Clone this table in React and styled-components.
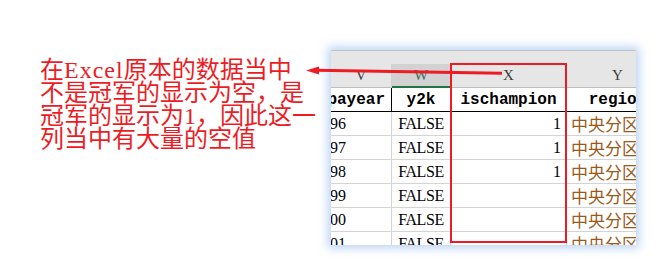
import React from "react";
import styled, { createGlobalStyle } from "styled-components";

const Global = createGlobalStyle`
  html, body { margin: 0; padding: 0; background: #ffffff; }
  * { box-sizing: border-box; }
`;

const RED = "#ed1c24";

const Page = styled.div`
  position: relative;
  width: 659px;
  height: 274px;
  background: #ffffff;
  display: flex;
  align-items: flex-start;
  padding: 50px 0 0 40px;
  overflow: hidden;
`;

const Note = styled.div`
  width: 264px;
  margin-top: 9px;
  font-family: "Liberation Serif", "Noto Sans CJK SC", serif;
  font-size: 24px;
  line-height: 23px;
  color: ${RED};
  white-space: nowrap;
`;

const Latin = styled.span`
  letter-spacing: 1px;
`;

const Panel = styled.div`
  position: relative;
  margin-left: 27px;
  width: 305px;
  height: 195px;
  overflow: hidden;
  background: #ffffff;
  border-top: 1px solid #c4c4c4;
  box-shadow: 0 0 9px 3px rgba(130, 175, 235, 0.55);
`;

const Strip = styled.div`
  height: 13px;
  background: #e6e6e6;
`;

const Grid = styled.div`
  display: grid;
  grid-template-columns: 61px 59px 116px 102px;
  width: 338px;
`;

const Cell = styled.div`
  height: 24px;
  display: flex;
  align-items: center;
  overflow: hidden;
  white-space: nowrap;
  border-right: 1px solid ${(p) => p.$line || "#d4d4d4"};
  border-bottom: 1px solid ${(p) => p.$line || "#d4d4d4"};
  justify-content: ${(p) => p.$justify || "flex-start"};
  padding: ${(p) => p.$pad || "0"};
`;

const LetterCell = styled(Cell)`
  background: ${(p) => (p.$active ? "#d2d2d2" : "#e6e6e6")};
  border-right-color: #d0d0d0;
  border-bottom: ${(p) => (p.$active ? "2px solid #217346" : "1px solid #bdbdbd")};
  font-family: "Liberation Serif", serif;
  font-size: 15px;
  color: ${(p) => (p.$active ? "#3a6f5a" : "#3c3c3c")};
  justify-content: center;
`;

const NameCell = styled(Cell)`
  font-family: "Liberation Mono", monospace;
  font-weight: bold;
  font-size: 16px;
  color: #000;
  border-right-color: #000;
  border-bottom-color: #000;
`;

const DataCell = styled(Cell)`
  font-family: "Liberation Serif", serif;
  font-size: 16px;
  color: #000;
`;

const FalseText = styled.span`
  letter-spacing: -0.4px;
`;

const RegionCell = styled(Cell)`
  font-family: "Noto Sans CJK SC", sans-serif;
  font-size: 17px;
  color: #9c5a1a;
  padding-left: 4px;
`;

/* The V column continues to the left of the visible window: its full width is shown clipped */
const Wide = styled.span`
  flex: none;
  width: 86px;
  display: flex;
  justify-content: ${(p) => p.$justify || "center"};
  padding: ${(p) => p.$pad || "0"};
`;

const Highlight = styled.div`
  position: absolute;
  left: 119px;
  top: 12px;
  width: 117px;
  height: 180px;
  border: 2px solid ${RED};
  pointer-events: none;
`;

const Overlay = styled.svg`
  position: absolute;
  left: 0;
  top: 0;
  pointer-events: none;
`;

const rows = [
  { year: "1996", champ: "1" },
  { year: "1997", champ: "1" },
  { year: "1998", champ: "1" },
  { year: "1999", champ: "" },
  { year: "2000", champ: "" },
  { year: "2001", champ: "" },
];

export default function App() {
  return (
    <>
      <Global />
      <Page>
        <Note>
          在<Latin>Excel</Latin>原本的数据当中
          <br />
          不是冠军的显示为空，是
          <br />
          冠军的显示为1，因此这一
          <br />
          列当中有大量的空值
        </Note>
        <Panel>
          <Strip />
          <Grid>
            <LetterCell $justify="flex-end">
              <Wide>V</Wide>
            </LetterCell>
            <LetterCell $active>W</LetterCell>
            <LetterCell>X</LetterCell>
            <LetterCell>Y</LetterCell>

            <NameCell $justify="flex-end">
              <Wide $justify="flex-end" $pad="0 6px 0 0">payear</Wide>
            </NameCell>
            <NameCell $justify="center">y2k</NameCell>
            <NameCell $justify="center">ischampion</NameCell>
            <NameCell $justify="center">region</NameCell>

            {rows.map((r) => (
              <React.Fragment key={r.year}>
                <DataCell $justify="flex-end">
                  <Wide $justify="flex-start" $pad="0 0 0 9px">{r.year}</Wide>
                </DataCell>
                <DataCell $justify="center">
                  <FalseText>FALSE</FalseText>
                </DataCell>
                <DataCell $justify="flex-end" $pad="0 5px 0 0">{r.champ}</DataCell>
                <RegionCell>中央分区</RegionCell>
              </React.Fragment>
            ))}
          </Grid>
          <Highlight />
        </Panel>
        <Overlay width="659" height="274" viewBox="0 0 659 274">
          <line x1="316" y1="70.3" x2="502" y2="73.2" stroke={RED} strokeWidth="3" />
          <polygon points="306,70.4 319,66.4 319,74.6" fill={RED} />
        </Overlay>
      </Page>
    </>
  );
}
